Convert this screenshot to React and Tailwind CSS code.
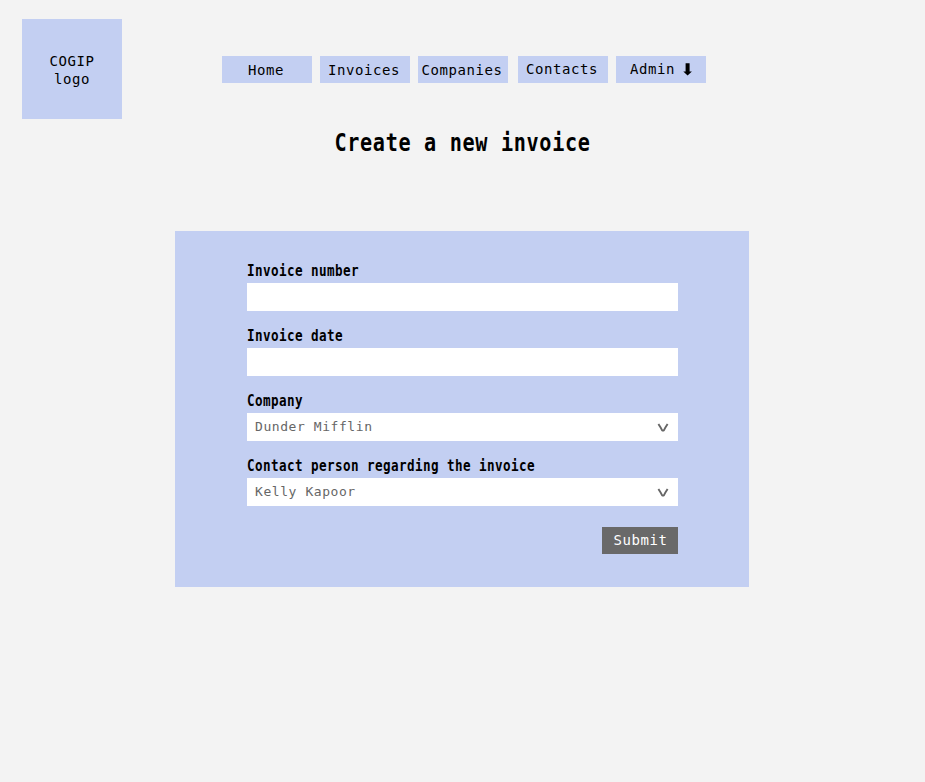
const navItems = [
  { label: 'Home', className: 'w-[90px] pr-[2px] pt-[1px]' },
  { label: 'Invoices', className: 'w-[90px] pr-[2px] pt-[1px]' },
  { label: 'Companies', className: 'mr-[2px] w-[90px] pr-[2px] pt-[1px]' },
  { label: 'Contacts', className: 'w-[90px] pr-[2px]' },
];

const fields = [
  { label: 'Invoice number' },
  { label: 'Invoice date' },
  { label: 'Company', value: 'Dunder Mifflin' },
  { label: 'Contact person regarding the invoice', value: 'Kelly Kapoor' },
];

function Arrow() {
  return (
    <svg className="ml-[8px] h-[13px] w-[9px]" viewBox="0 0 9 13" fill="black">
      <path d="M2.6 0.3h4v8.2h2.3L4.6 12.5 0.3 8.5h2.3z" />
    </svg>
  );
}

function Chevron() {
  return (
    <svg className="mt-[1px] h-[10px] w-[12px]" viewBox="0 0 12 10" fill="none" stroke="#666" strokeWidth="1.9">
      <path d="M1.4 1 C3 3.4 4.6 6 5.3 7.6H6.7C7.4 6 9 3.4 10.6 1" strokeLinejoin="bevel" />
    </svg>
  );
}

function Field({ label, value }) {
  return (
    <div className="flex h-[65px] flex-col">
      <label className="h-[22px] w-max origin-left scale-x-[0.84] whitespace-nowrap text-[15px] leading-[21px] font-bold tracking-[0.49px]">
        {label}
      </label>
      <div className="flex h-[28px] items-center justify-between bg-white pr-[9px] pl-[8px] text-[13px] leading-[28px] tracking-[0.57px] text-[#666]">
        {value && (
          <>
            <span className="-mt-[1px]">{value}</span>
            <Chevron />
          </>
        )}
      </div>
    </div>
  );
}

export default function App() {
  return (
    <div className="h-[782px] w-[925px] bg-[#f3f3f3] font-['DejaVu_Sans_Mono','Liberation_Mono',monospace] text-[14px] tracking-[0.57px] text-black">
      <header className="flex h-[119px] pt-[19px] pl-[22px]">
        <div className="flex h-[100px] w-[100px] flex-col justify-center bg-[#c3cff2] pt-[2px] text-center leading-[18px]">
          <span>COGIP</span>
          <span>logo</span>
        </div>
        <nav className="mt-[37px] ml-[100px] flex h-[27px] gap-[8px] leading-[27px]">
          {navItems.map(({ label, className }) => (
            <a key={label} className={`${className} h-[27px] bg-[#c3cff2] text-center`}>
              {label}
            </a>
          ))}
          <a className="flex h-[27px] w-[90px] items-center bg-[#c3cff2] pl-[14px]">
            Admin
            <Arrow />
          </a>
        </nav>
      </header>
      <h1 className="flex h-[112px] justify-center pt-[9px] text-[24px] leading-[30px] font-bold tracking-[0.8px] whitespace-nowrap">
        <span className="scale-x-[0.84]">Create a new invoice</span>
      </h1>
      <form className="ml-[175px] h-[356px] w-[574px] bg-[#c3cff2] px-[72px] pt-[30px] pr-[71px]">
        {fields.map((field) => (
          <Field key={field.label} {...field} />
        ))}
        <div className="flex justify-end pt-[6px]">
          <button type="button" className="h-[27px] w-[76px] bg-[#696969] pb-[1px] pl-[1px] text-center leading-[25px] tracking-[0.57px] text-white">
            Submit
          </button>
        </div>
      </form>
    </div>
  );
}
